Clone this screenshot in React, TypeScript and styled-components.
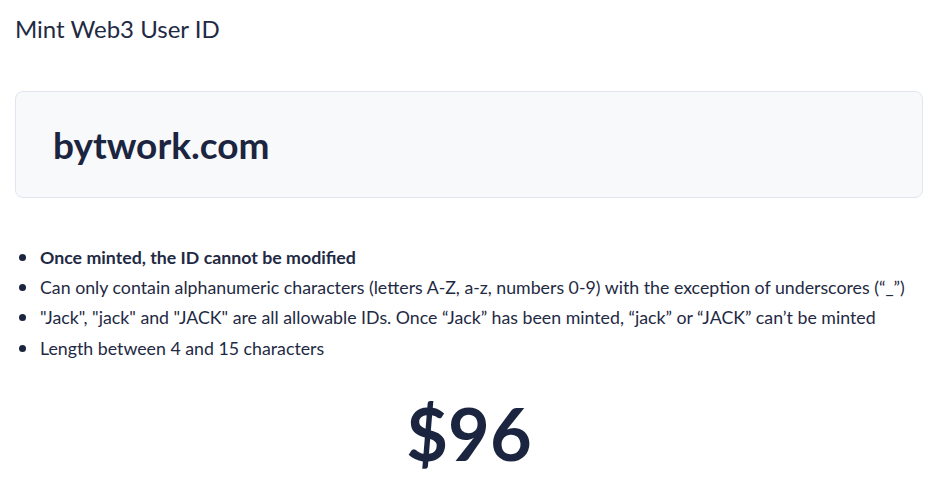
import React from 'react';
import styled, { createGlobalStyle } from 'styled-components';

const GlobalStyle = createGlobalStyle`
  body {
    margin: 0;
    background: #ffffff;
    font-family: Lato, "Open Sans", sans-serif;
    color: #1b2540;
  }
`;

const Page = styled.div`
  padding: 14px 29px 0 15px;
`;

const Title = styled.h1`
  margin: 0;
  font-size: 24px;
  font-weight: 400;
  line-height: 30px;
  color: #1f2a44;
`;

const IdCard = styled.div`
  margin-top: 47px;
  height: 105px;
  display: flex;
  align-items: center;
  padding: 0 37px;
  background: #f8f9fb;
  border: 1px solid #e2e5ee;
  border-radius: 8px;
`;

const IdText = styled.span`
  font-size: 37px;
  font-weight: 700;
  color: #1b2540;
`;

const Rules = styled.ul`
  margin: 44px 0 0;
  padding: 0 0 0 25px;
  list-style: none;
`;

const Rule = styled.li<{ $strong?: boolean }>`
  position: relative;
  font-size: 17.75px;
  line-height: 30.2px;
  font-weight: ${(p) => (p.$strong ? 700 : 400)};
  color: #1f2a44;

  &::before {
    content: '';
    position: absolute;
    left: -21px;
    top: 12px;
    width: 7px;
    height: 7px;
    border-radius: 50%;
    background: #1b2540;
  }
`;

const Price = styled.div`
  margin-top: 25px;
  text-align: center;
  font-size: 72px;
  font-weight: 700;
  line-height: 90px;
  color: #1b2540;
`;

const rules = [
  { text: 'Once minted, the ID cannot be modified', strong: true },
  { text: 'Can only contain alphanumeric characters (letters A-Z, a-z, numbers 0-9) with the exception of underscores (“_”)' },
  { text: '"Jack", "jack" and "JACK" are all allowable IDs. Once “Jack” has been minted, “jack” or “JACK” can’t be minted' },
  { text: 'Length between 4 and 15 characters' },
];

const App = () => (
  <>
    <GlobalStyle />
    <Page>
      <Title>Mint Web3 User ID</Title>
      <IdCard>
        <IdText>bytwork.com</IdText>
      </IdCard>
      <Rules>
        {rules.map((r) => (
          <Rule key={r.text} $strong={r.strong}>{r.text}</Rule>
        ))}
      </Rules>
      <Price>$96</Price>
    </Page>
  </>
);

export default App;
